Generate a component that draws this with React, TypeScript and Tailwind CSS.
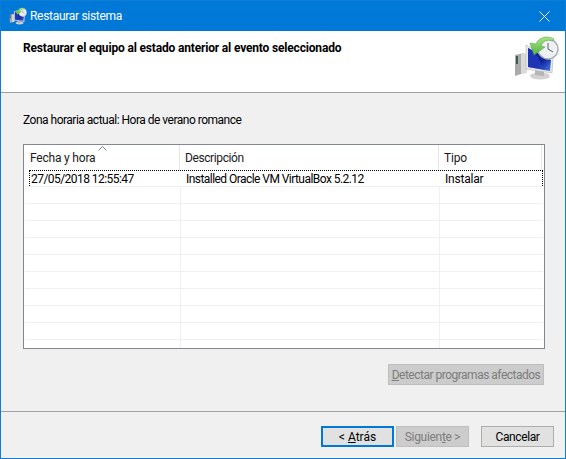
const font = "font-['Roboto',sans-serif]";

function BackupIcon({ size, id }: { size: number; id: string }) {
  return (
    <svg width={size} height={size} viewBox="0 0 46 46" aria-hidden="true">
      <defs>
        <linearGradient id={`${id}-scr`} x1="0" y1="0" x2="1" y2="1">
          <stop offset="0" stopColor="#0a1fa8" />
          <stop offset="0.6" stopColor="#10249a" />
          <stop offset="1" stopColor="#4a7ce6" />
        </linearGradient>
        <linearGradient id={`${id}-arr`} x1="0" y1="0" x2="0" y2="1">
          <stop offset="0" stopColor="#a6e584" />
          <stop offset="1" stopColor="#58b442" />
        </linearGradient>
      </defs>
      <path d="M2 20 L11 18 L11 38 L2 41 Z" fill="#a9aaa9" />
      <path d="M3 21 L5 21 L5 29 L3 29 Z" fill="#3d5a50" />
      <path d="M8 18 L14 19 L14 38 L8 39 Z" fill="#d8d9d8" />
      <ellipse cx="27" cy="41" rx="10" ry="3.5" fill="#d2d2d2" />
      <path d="M22 35 L31 36 L31 41 L22 40 Z" fill="#b5b5b5" />
      <path d="M13 10 L40 23 L39 38 L13 34 Z" fill="#e8e9ea" stroke="#b4b6b8" strokeWidth="0.6" />
      <path d="M15 13 L38 25 L37 36 L15 32 Z" fill={`url(#${id}-scr)`} />
      <path d="M15 13 L21 16 L32 35 L15 32 Z" fill="#2b46c8" opacity="0.55" />
      <circle cx="35" cy="14" r="10" fill="#eef1f3" stroke="#a8acaf" strokeWidth="1.4" />
      <path d="M35 8 L35 14 L40 17" fill="none" stroke="#5a6068" strokeWidth="1" />
      <path d="M23 9 C26 2 34 0 41 4 L39 6 C34 4 30 6 28 11 L32 12 L21 20 L17 8 Z" fill={`url(#${id}-arr)`} stroke="#4a9a38" strokeWidth="0.5" />
    </svg>
  );
}

const emptyRows = Array.from({ length: 10 }, (_, i) => i);

export default function App() {
  return (
    <div className={`${font} w-[566px] h-[459px] flex flex-col border border-[#0c7ed8] bg-[#f0f0f0] text-[12px] leading-[16px] text-black overflow-hidden`}>
      <div className="h-[30px] bg-[#0078d7] flex items-center pl-[8px] pr-[15px] text-white shrink-0">
        <BackupIcon size={18} id="small" />
        <span className="ml-[3px] tracking-[-0.3px]">Restaurar sistema</span>
        <svg className="ml-auto" width="11" height="11" viewBox="0 0 11 11" aria-hidden="true">
          <path d="M0.5 0.5 L10.5 10.5 M10.5 0.5 L0.5 10.5" stroke="#fff" strokeWidth="1" fill="none" />
        </svg>
      </div>

      <div className="h-[62px] bg-white border-b border-[#a0a0a0] flex pl-[22px] pr-[6px] pt-[9px] justify-between shrink-0">
        <h1 className="font-bold tracking-[-0.17px]">Restaurar el equipo al estado anterior al evento seleccionado</h1>
        <div className="-mt-[5px]">
          <BackupIcon size={46} id="large" />
        </div>
      </div>

      <div className="flex-1 flex flex-col pl-[22px] pr-[21px] pt-[19px]">
        <p className="h-[16px] tracking-[-0.5px]">Zona horaria actual: Hora de verano romance</p>

        <div className="mt-[16px] w-[522px] h-[205px] border border-[#828790] bg-white flex flex-col overflow-hidden">
          <div className="h-[25px] flex text-[#1a1a1a] shrink-0">
            <div className="relative w-[156px] pl-[6px] pt-[5px] border-r border-[#e5e5e5] tracking-[-0.2px]">
              Fecha y hora
              <svg className="absolute left-[74px] top-[1px]" width="9" height="5" viewBox="0 0 9 5" aria-hidden="true">
                <path d="M0.5 4.5 L4.5 0.5 L8.5 4.5" stroke="#7a7f87" strokeWidth="1" fill="none" />
              </svg>
            </div>
            <div className="w-[259px] pl-[5px] pt-[5px] border-r border-[#e5e5e5] tracking-[-0.4px]">Descripción</div>
            <div className="w-[103px] pl-[5px] pt-[5px] border-r border-[#e5e5e5] tracking-[-0.2px]">Tipo</div>
          </div>

          <div className="ml-[5px] mr-[1px] h-[16px] flex border border-b-0 border-dotted border-black shrink-0">
            <div className="w-[151px] pl-[1px] pt-px tracking-[-0.55px] leading-[15px]">27/05/2018 12:55:47</div>
            <div className="w-[259px] pl-[5px] pt-px tracking-[-0.55px] leading-[15px]">Installed Oracle VM VirtualBox 5.2.12</div>
            <div className="pl-[5px] pt-px tracking-[-0.2px] leading-[15px]">Instalar</div>
          </div>

          {emptyRows.map((i) => (
            <div key={i} className="ml-[1px] mr-[1px] h-[17px] flex border-t border-[#f0f0f0] shrink-0">
              <div className="w-[156px] border-r border-[#f0f0f0]" />
              <div className="w-[259px] border-r border-[#f0f0f0]" />
              <div className="flex-1" />
            </div>
          ))}
        </div>

        <div className="mt-[15px] flex justify-end">
          <button disabled className={`${font} w-[156px] h-[21px] bg-[#cccccc] border border-[#bfbfbf] text-[#7d7d7d] text-[12px] tracking-[-0.5px] whitespace-nowrap`}>
            <span className="underline">D</span>etectar programas afectados
          </button>
        </div>
      </div>

      <div className="h-[47px] border-t border-[#a0a0a0] flex items-start pt-[14px] pl-[320px] shrink-0">
        <button className={`${font} w-[73px] h-[21px] bg-[#e1e1e1] border-2 border-[#0078d7] text-[12px] leading-[14px]`}>
          &lt; <span className="underline">A</span>trás
        </button>
        <button disabled className={`${font} ml-[2px] w-[73px] h-[21px] bg-[#cccccc] border border-[#bfbfbf] text-[#7d7d7d] text-[12px] tracking-[-0.3px]`}>
          Siguien<span className="underline">t</span>e &gt;
        </button>
        <button className={`${font} ml-[12px] w-[73px] h-[21px] bg-[#e1e1e1] border border-[#adadad] text-[12px] tracking-[-0.4px]`}>
          Cancelar
        </button>
      </div>
    </div>
  );
}
